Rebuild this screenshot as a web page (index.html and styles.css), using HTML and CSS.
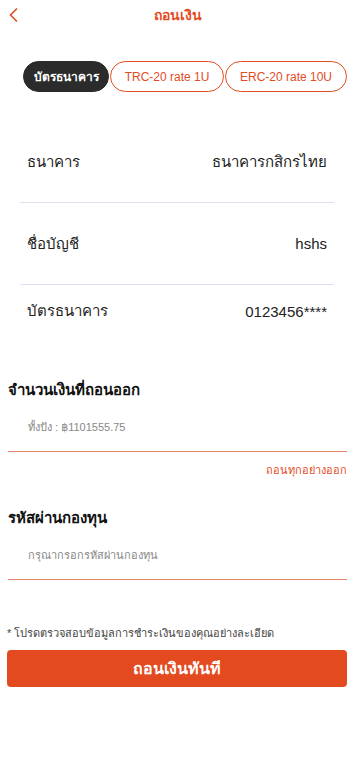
FILE: index.html
```html
<!DOCTYPE html>
<html lang="th">
<head>
<meta charset="utf-8">
<link rel="stylesheet" href="styles.css">
</head>
<body>
<div class="page">
  <header class="header">
    <svg class="back" width="12" height="16" viewBox="0 0 12 16"><path d="M9 1.5 L2.5 8 L9 14.5" fill="none" stroke="#e34c1f" stroke-width="1.6"/></svg>
    <div class="title">ถอนเงิน</div>
  </header>
  <div class="tabs">
    <div class="tab active t1">บัตรธนาคาร</div>
    <div class="tab t2">TRC-20 rate 1U</div>
    <div class="tab t3">ERC-20 rate 10U</div>
  </div>
  <div class="card">
    <div class="row"><span>ธนาคาร</span><span>ธนาคารกสิกรไทย</span></div>
    <div class="row"><span>ชื่อบัญชี</span><span>hshs</span></div>
    <div class="row last"><span>บัตรธนาคาร</span><span>0123456****</span></div>
  </div>
  <div class="section">
    <div class="label">จำนวนเงินที่ถอนออก</div>
    <div class="input"><span class="ph">ทั้งปัง : ฿1101555.75</span></div>
    <div class="all">ถอนทุกอย่างออก</div>
  </div>
  <div class="section pw">
    <div class="label">รหัสผ่านกองทุน</div>
    <div class="input"><span class="ph">กรุณากรอกรหัสผ่านกองทุน</span></div>
  </div>
  <div class="note">* โปรดตรวจสอบข้อมูลการชำระเงินของคุณอย่างละเอียด</div>
  <button class="submit">ถอนเงินทันที</button>
</div>
</body>
</html>
```
FILE: styles.css
```css
* { box-sizing: border-box; }
body {
  margin: 0;
  background: #fff;
  font-family: "Liberation Sans", "Noto Sans", "DejaVu Sans", sans-serif;
  color: #222;
}
.page { width: 355px; }
.header {
  position: relative;
  height: 30px;
  display: flex;
  align-items: center;
  justify-content: center;
}
.back { position: absolute; left: 8px; top: 7px; }
.title { color: #e34c1f; font-size: 14px; font-weight: 700; }
.tabs {
  display: flex;
  gap: 1px;
  padding: 31px 0 0 23px;
}
.tab {
  height: 31px;
  border: 1px solid #e34c1f;
  border-radius: 16px;
  color: #e34c1f;
  font-size: 12px;
  display: flex;
  align-items: center;
  justify-content: center;
}
.t1 { width: 86px; }
.t2 { width: 114px; }
.t3 { width: 122px; }
.tab.active { background: #2b2b2b; border-color: #2b2b2b; color: #fff; font-weight: 700; }
.card { padding: 29px 21px 0 20px; }
.row {
  display: flex;
  justify-content: space-between;
  font-size: 15px;
  padding: 0 7px;
  height: 82px;
  align-items: center;
  border-bottom: 1px solid #e2def2;
}
.row.last { border-bottom: none; height: 52px; }
.section { padding: 0 8px; margin-top: 41px; }
.section.pw { margin-top: 27px; }
.label { font-size: 15px; font-weight: 700; color: #111; }
.input {
  height: 50px;
  border-bottom: 1px solid #e8836a;
  display: flex;
  align-items: center;
  padding-left: 20px;
}
.ph { font-size: 11px; color: #888; }
.all { text-align: right; color: #e34c1f; font-size: 11px; margin-top: 9px; }
.note { font-size: 11px; color: #444; padding: 0 7px; margin-top: 44px; }
.submit {
  display: block;
  margin: 8px 8px 0 7px;
  width: 340px;
  height: 37px;
  border: none;
  border-radius: 4px;
  background: #e34a1f;
  color: #fff;
  font-family: inherit;
  font-size: 16px;
  font-weight: 700;
}
```
